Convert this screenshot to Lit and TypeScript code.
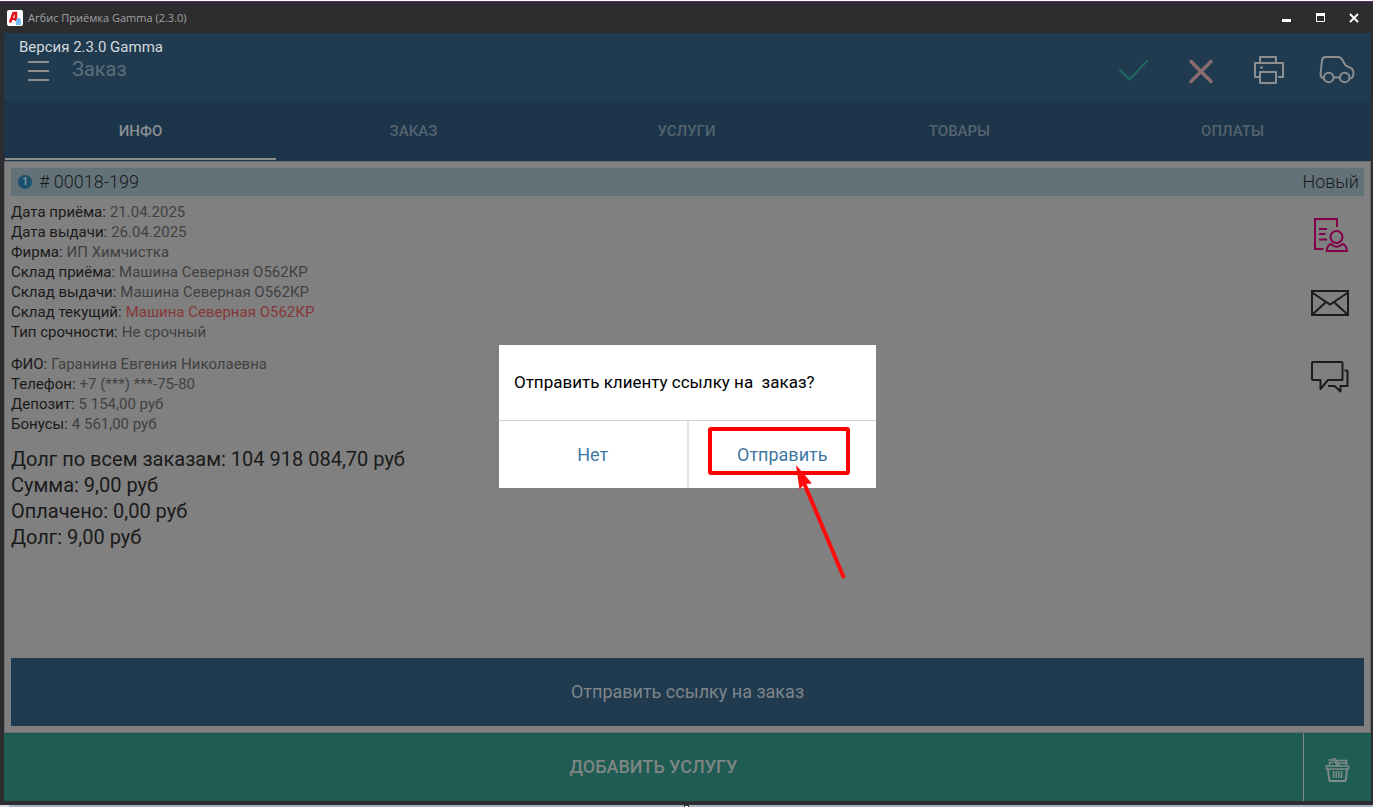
import { LitElement, html, css, svg, nothing } from "lit";
import { customElement, state } from "lit/decorators.js";

interface Field {
  label: string;
  value: string;
  alert?: boolean;
}

const TABS = ["ИНФО", "ЗАКАЗ", "УСЛУГИ", "ТОВАРЫ", "ОПЛАТЫ"];

const ORDER_FIELDS: Field[] = [
  { label: "Дата приёма:", value: "21.04.2025" },
  { label: "Дата выдачи:", value: "26.04.2025" },
  { label: "Фирма:", value: "ИП Химчистка" },
  { label: "Склад приёма:", value: "Машина Северная О562КР" },
  { label: "Склад выдачи:", value: "Машина Северная О562КР" },
  { label: "Склад текущий:", value: "Машина Северная О562КР", alert: true },
  { label: "Тип срочности:", value: "Не срочный" },
];

const CLIENT_FIELDS: Field[] = [
  { label: "ФИО:", value: "Гаранина Евгения Николаевна" },
  { label: "Телефон:", value: "+7 (***) ***-75-80" },
  { label: "Депозит:", value: "5 154,00 руб" },
  { label: "Бонусы:", value: "4 561,00 руб" },
];

const TOTALS = [
  "Долг по всем заказам: 104 918 084,70 руб",
  "Сумма: 9,00 руб",
  "Оплачено: 0,00 руб",
  "Долг: 9,00 руб",
];

const icon = (w: number, h: number, body: unknown) => html`<svg
  width=${w} height=${h} viewBox="0 0 ${w} ${h}" fill="none" aria-hidden="true">${body}</svg>`;

const icons = {
  menu: icon(22, 22, svg`<path d="M1 2h21M1 11h21M1 20h21" stroke="#8b8f91" stroke-width="2"/>`),
  check: icon(32, 28, svg`<path d="M2.500 13.500 12.500 23.500 31 4" stroke="#1f6a5e" stroke-width="2"/>`),
  cross: icon(26, 28, svg`<path d="M3 5.500 23 25.500M23 5.500 3 25.500" stroke="#8a6c70" stroke-width="3.500" stroke-linecap="round"/>`),
  print: icon(32, 30, svg`<g stroke="#8b8f91" stroke-width="2" stroke-linejoin="round"><path d="M7 8V2h16v6"/><path d="M6 22H2V8h28v14h-5"/><path d="M7 17h16v11H7z"/><path d="M7 12.500h3"/></g>`),
  car: icon(36, 30, svg`<g stroke="#8b8f91" stroke-width="2" stroke-linejoin="round"><path d="M5 23.500C2.500 23 1.500 22 1.500 19L3 5.500C3.200 3.500 4.500 2 6.500 2H19c2 0 3.300 1 4.300 2.800L26 9.500c.6 1 1.200 1.500 2.500 2 4.300 1.200 6 2.500 6 6 0 3-1 5.300-3 6"/><path d="M14.500 22.500h6"/><circle cx="9.700" cy="22.500" r="4.800"/><circle cx="25.700" cy="22.500" r="4.800"/></g>`),
  report: icon(40, 40, svg`<g stroke="#80004a" stroke-width="2"><path d="M27 12V4H5v30h8.500"/><path d="M9 14h8M9 19h6.500M9 24.500h8"/><circle cx="26.500" cy="22" r="6"/><path d="M21 29c-3 1-4 3.500-4.300 7H37c-.3-3.500-1.500-6-4.500-7-3.500 3.500-8 3.500-11.500 0z"/></g>`),
  mail: icon(40, 40, svg`<g stroke="#1c1c1c" stroke-width="2"><path d="M2 6h36v24H2z"/><path d="m2 7.500 18 12L38 7.500M2.500 29.500 15.500 17.500M37.500 29.500 24.500 17.500"/></g>`),
  chat: icon(40, 40, svg`<g stroke="#1c1c1c" stroke-width="2" stroke-linejoin="round"><path d="M3 7h28.500q1 0 1 1v17H18l-7.500 9v-9H3q-1 0-1-1V8q0-1 1-1z"/><path d="M34.500 15.500h2q1 0 1 1V31h-7v5.500L24.500 31H18"/></g>`),
  basket: icon(26, 26, svg`<g stroke="#7f8b88"><path d="M1.500 9h22v3h-22z" stroke-width="1.500"/><path d="m3 12.500 1 9.500q.3 2 2 2h13q1.700 0 2-2l1-9.500" stroke-width="2"/><path d="M8.500 14v7M11.200 14v7M13.800 14v7M16.500 14v7" stroke-width="1.500"/><path d="M4.500 8.500V5.500H8M3.500 3h4M11.500 3.500h10V8M13 6h8" stroke-width="1.500"/><path d="m7.500 1.500 5.500 8M9.500 1 14.500 8.500" stroke-width="1.500"/></g>`),
  minimize: icon(10, 10, svg`<path d="M1 7.500h9" stroke="#fff" stroke-width="3"/>`),
  maximize: icon(10, 10, svg`<path d="M1.500 1v7.500h8V1" stroke="#fff"/><path d="M1 1.500h9" stroke="#fff" stroke-width="3"/>`),
  close: icon(10, 10, svg`<path d="m1 1 8 8M9 1 1 9" stroke="#fff" stroke-width="2"/>`),
  logo: icon(16, 16, svg`<rect width="16" height="16" rx="2" fill="#fff"/><path d="M3 12.500 6.500 3H9v8" stroke="#e3101c" stroke-width="2.500"/><path d="M4 9h6" stroke="#e3101c" stroke-width="2"/><path d="M9 9.500 10.500 8h2L14 9.500V15H9z" fill="#74bdf5"/>`),
};

@customElement("app-root")
export class AppRoot extends LitElement {
  @state() private activeTab = 0;
  @state() private dialogOpen = true;

  static styles = css`
    :host {
      display: flex;
      flex-direction: column;
      min-height: 100vh;
      box-sizing: border-box;
      border-top: 1px solid #fff;
      background: #2d2d2f;
      font-family: Roboto, "Liberation Sans", sans-serif;
      font-size: 15px;
      line-height: 20px;
      color: #1a1a1a;
    }
    svg { display: block; flex: none; }
    button {
      font: inherit;
      color: inherit;
      border: 0;
      margin: 0;
      padding: 0;
      background: none;
      display: flex;
      align-items: center;
      justify-content: center;
      cursor: pointer;
    }
    .titlebar {
      display: flex;
      align-items: center;
      box-sizing: border-box;
      height: 32px;
      padding: 0 2px 0 7px;
      border-top: 1px solid #5c2a72;
    }
    .titlebar .name {
      flex: 1;
      margin: 0 0 0 5px;
      font-family: "Open Sans", "Noto Sans", sans-serif;
      font-size: 11px;
      color: #a3a3a3;
    }
    .winbtn { width: 34px; height: 30px; }
    .app {
      flex: 1;
      display: flex;
      flex-direction: column;
      position: relative;
      margin: 0 2px 4px 4px;
    }
    .header {
      display: flex;
      align-items: center;
      height: 68px;
      background: #203b50;
    }
    .square { box-sizing: border-box; width: 68px; height: 68px; flex: none; }
    .menu { padding-top: 8px; }
    .tool { padding-top: 6px; }
    .title {
      flex: 1;
      margin: 0;
      padding-top: 4px;
      font-size: 20px;
      font-weight: 400;
      line-height: 24px;
      color: #5d6d78;
    }
    .version {
      position: absolute;
      top: 4px;
      left: 15px;
      color: #d3d8dc;
    }
    .tabs {
      display: flex;
      height: 60px;
      padding-right: 2px;
      background: #1c354b;
    }
    .tab {
      flex: 1 1 0;
      box-sizing: border-box;
      margin: 0 1px 1px;
      border-top: 2px solid transparent;
      border-bottom: 2px solid transparent;
      font-weight: 500;
      color: #55636e;
    }
    .tab.active { color: #8b8f91; border-bottom-color: #8b8f91; }
    .page {
      flex: 1;
      display: flex;
      flex-direction: column;
      padding: 6px;
      border: 1px solid #6c6c6c;
      background: #808080;
    }
    .status {
      display: flex;
      align-items: center;
      gap: 7px;
      height: 28px;
      padding: 0 5px 0 7px;
      background: #637279;
      font-size: 18px;
      font-weight: 300;
    }
    .number { flex: 1; }
    .badge {
      width: 14px;
      height: 14px;
      border-radius: 50%;
      background: #1b4f6e;
      color: #8b9aa2;
      font-size: 10px;
      font-weight: 500;
      line-height: 14px;
      text-align: center;
    }
    .content { flex: 1; display: flex; justify-content: space-between; }
    .details { display: flex; flex-direction: column; gap: 12px; padding-top: 6px; }
    .fields { margin: 0; }
    .field { display: flex; gap: 4px; }
    .field dt, .field dd { margin: 0; }
    .field dd { color: #404040; }
    .field dd.alert { color: #863838; }
    .totals { margin: 0; padding: 0; list-style: none; font-size: 20px; line-height: 26px; }
    .actions { width: 68px; padding-top: 4px; }
    .actions button { width: 68px; height: 70px; }
    .link {
      height: 68px;
      background: #203b50;
      color: #7f8589;
      font-size: 18px;
    }
    .footer {
      display: flex;
      height: 68px;
      background: #1f5c54;
      color: #7f8582;
    }
    .add { flex: 1; font-size: 18px; font-weight: 500; }
    .basket { padding-top: 6px; border-left: 1px solid #7f8b88; }
    .overlay {
      position: absolute;
      inset: 0 0 2px;
      display: flex;
      align-items: center;
      justify-content: center;
    }
    .dialog { position: relative; width: 377px; background: #fff; color: #000; }
    .question {
      margin: 0;
      padding: 25px 15px 26px;
      font-size: 17px;
      line-height: 24px;
      white-space: pre;
      border-bottom: 1px solid #cdcfd8;
    }
    .choices { display: flex; }
    .choices button {
      flex: 1 1 0;
      box-sizing: border-box;
      height: 67px;
      padding-top: 2px;
      font-size: 18px;
      color: #3e78a3;
    }
    .choices button + button { border-left: 2px solid #e4e5ec; }
    .pointer { position: absolute; left: 0; top: 0; pointer-events: none; }
    .taskline {
      display: flex;
      justify-content: center;
      height: 2px;
      padding-right: 9px;
      border-left: 9px solid #d5d9ea;
      background: #a9b0c5;
    }
    .grip { width: 3px; height: 1px; border: solid #333; border-width: 1px 1px 0; background: #fff; }
  `;

  private fields(list: Field[]) {
    return html`<dl class="fields">
      ${list.map((f) => html`<div class="field"><dt>${f.label}</dt><dd class=${f.alert ? "alert" : nothing}>${f.value}</dd></div>`)}
    </dl>`;
  }

  private closeDialog() {
    this.dialogOpen = false;
  }

  render() {
    return html`
      <div class="titlebar">
        ${icons.logo}
        <p class="name">Агбис Приёмка Gamma (2.3.0)</p>
        <button class="winbtn" aria-label="Свернуть">${icons.minimize}</button>
        <button class="winbtn" aria-label="Развернуть">${icons.maximize}</button>
        <button class="winbtn" aria-label="Закрыть">${icons.close}</button>
      </div>
      <div class="app">
        <header class="header">
          <button class="square menu" aria-label="Меню">${icons.menu}</button>
          <h1 class="title">Заказ</h1>
          <button class="square tool" aria-label="Сохранить">${icons.check}</button>
          <button class="square tool" aria-label="Отменить">${icons.cross}</button>
          <button class="square tool" aria-label="Печать">${icons.print}</button>
          <button class="square tool" aria-label="Доставка">${icons.car}</button>
        </header>
        <nav class="tabs">
          ${TABS.map((t, i) => html`<button class="tab ${i === this.activeTab ? "active" : ""}" @click=${() => (this.activeTab = i)}>${t}</button>`)}
        </nav>
        <main class="page">
          <div class="status">
            <span class="badge">1</span>
            <span class="number"># 00018-199</span>
            <span>Новый</span>
          </div>
          <div class="content">
            <div class="details">
              ${this.fields(ORDER_FIELDS)} ${this.fields(CLIENT_FIELDS)}
              <ul class="totals">${TOTALS.map((t) => html`<li>${t}</li>`)}</ul>
            </div>
            <div class="actions">
              <button aria-label="Карточка клиента">${icons.report}</button>
              <button aria-label="Письмо">${icons.mail}</button>
              <button aria-label="Сообщения">${icons.chat}</button>
            </div>
          </div>
          <button class="link" @click=${() => (this.dialogOpen = true)}>Отправить ссылку на заказ</button>
        </main>
        <footer class="footer">
          <button class="add">ДОБАВИТЬ УСЛУГУ</button>
          <button class="square basket" aria-label="Корзина">${icons.basket}</button>
        </footer>
        <div class="version">Версия 2.3.0 Gamma</div>
        ${this.dialogOpen
          ? html`<div class="overlay">
              <div class="dialog" role="dialog" aria-labelledby="question">
                <p class="question" id="question">Отправить клиенту ссылку на  заказ?</p>
                <div class="choices">
                  <button @click=${this.closeDialog}>Нет</button>
                  <button @click=${this.closeDialog}>Отправить</button>
                </div>
                <svg class="pointer" width="377" height="240" viewBox="0 0 377 240" fill="none" aria-hidden="true">
                  <rect x="211" y="84" width="138" height="44" rx="1" stroke="#f00" stroke-width="4" />
                  <path d="M305 138 345 233" stroke="#ff0d0d" stroke-width="4" />
                  <path d="M297 120 313 138.500 305.500 139 300.500 144.500z" fill="#ff0d0d" />
                </svg>
              </div>
            </div>`
          : nothing}
      </div>
      <div class="taskline"><span class="grip"></span></div>
    `;
  }
}
